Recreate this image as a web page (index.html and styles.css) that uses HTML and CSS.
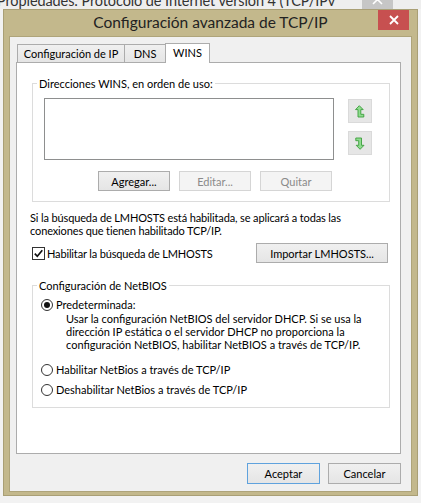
FILE: index.html
```html
<!DOCTYPE html>
<html lang="es">
<head>
<meta charset="utf-8">
<title>Configuración avanzada de TCP/IP</title>
<link rel="stylesheet" href="styles.css">
</head>
<body>
<div class="bg-bar">
  <div class="bg-title">Propiedades: Protocolo de Internet versión 4 (TCP/IPv</div>
  <div class="bg-close">
    <svg width="31" height="9" viewBox="0 0 31 9"><path d="M11 -5 L20 4 M20 -5 L11 4" stroke="#fff" stroke-width="1.6" fill="none"/></svg>
  </div>
</div>
<div class="dialog">
  <div class="titlebar">
    <div class="tb-spacer"></div>
    <div class="title">Configuración avanzada de TCP/IP</div>
    <div class="tb-right">
      <div class="close">
        <svg width="10" height="10" viewBox="0 0 10 10"><path d="M1 1 L9 9 M9 1 L1 9" stroke="#fff" stroke-width="1.8" fill="none"/></svg>
      </div>
    </div>
  </div>
  <div class="client">
    <div class="tabs">
      <div class="tab tab-ip">Configuración de IP</div>
      <div class="tab tab-dns">DNS</div>
      <div class="tab tab-wins active">WINS</div>
    </div>
    <div class="panel">
      <fieldset class="group group-wins">
        <legend>Direcciones WINS, en orden de uso:</legend>
        <div class="group-body wins-body">
          <div class="list-row">
            <div class="listbox"></div>
            <div class="arrows">
              <div class="arrow-btn">
                <svg width="10" height="13" viewBox="0 0 10 13"><path d="M4.3 0.7 L8.2 4.6 L5.8 4.6 L5.8 9.3 L8.8 9.3 L8.8 12 L3 12 L3 4.6 L0.5 4.6 Z" fill="#8fdc8f" stroke="#3c9e3c" stroke-width="0.9" stroke-linejoin="round"/></svg>
              </div>
              <div class="arrow-btn">
                <svg width="10" height="13" viewBox="0 0 10 13"><path d="M0.8 1 L6.5 1 L6.5 8.3 L9 8.3 L5.1 12.3 L1.2 8.3 L3.7 8.3 L3.7 3.7 L0.8 3.7 Z" fill="#8fdc8f" stroke="#3c9e3c" stroke-width="0.9" stroke-linejoin="round"/></svg>
              </div>
            </div>
          </div>
          <div class="btn-row">
            <div class="btn">Agregar...</div>
            <div class="btn disabled">Editar...</div>
            <div class="btn disabled">Quitar</div>
          </div>
        </div>
      </fieldset>
      <p class="note">Si la búsqueda de LMHOSTS está habilitada, se aplicará a todas las<br>conexiones que tienen habilitado TCP/IP.</p>
      <div class="lm-row">
        <div class="check">
          <span class="checkbox">
            <svg width="11" height="11" viewBox="0 0 11 11"><path d="M1.8 5.6 L4.3 8.3 L9.3 2.2" stroke="#111" stroke-width="1.7" fill="none"/></svg>
          </span>
          <span class="check-label">Habilitar la búsqueda de LMHOSTS</span>
        </div>
        <div class="btn btn-import">Importar LMHOSTS...</div>
      </div>
      <fieldset class="group group-netbios">
        <legend>Configuración de NetBIOS</legend>
        <div class="group-body netbios-body">
          <div class="radio-row"><span class="radio checked"></span><span>Predeterminada:</span></div>
          <div class="desc">Usar la configuración NetBIOS del servidor DHCP. Si se usa la<br>dirección IP estática o el servidor DHCP no proporciona la<br>configuración NetBIOS, habilitar NetBIOS a través de TCP/IP.</div>
          <div class="radio-row r2"><span class="radio"></span><span>Habilitar NetBios a través de TCP/IP</span></div>
          <div class="radio-row r3"><span class="radio"></span><span>Deshabilitar NetBios a través de TCP/IP</span></div>
        </div>
      </fieldset>
    </div>
    <div class="footer">
      <div class="btn btn-footer btn-default">Aceptar</div>
      <div class="btn btn-footer">Cancelar</div>
    </div>
  </div>
</div>
</body>
</html>
```

FILE: styles.css
```css
html, body {
  margin: 0;
  padding: 0;
}

body {
  width: 421px;
  height: 503px;
  overflow: hidden;
  background: #f2f2f2;
  font-family: Lato, "Liberation Sans", sans-serif;
  font-size: 11px;
  color: #000;
}

/* Parent window title strip (mostly hidden behind the dialog) */
.bg-bar {
  height: 9px;
  overflow: hidden;
  display: flex;
  background: #eeeeee;
}

.bg-title {
  flex: 1;
  min-width: 0;
  margin-top: -7px;
  margin-left: -3px;
  font-size: 14.5px;
  line-height: 15px;
  letter-spacing: -0.1px;
  white-space: nowrap;
  overflow: hidden;
  color: #333333;
}

.bg-close {
  flex: none;
  width: 31px;
  height: 9px;
  margin-right: 28px;
  background: #c6c6c6;
}

.bg-close svg {
  display: block;
}

/* Dialog window */
.dialog {
  box-sizing: border-box;
  width: 415px;
  height: 487px;
  margin-left: 3px;
  background: #c3b88c;
  border: 1px solid #a99f75;
  padding: 0 5px 3px 5px;
  display: flex;
  flex-direction: column;
}

.titlebar {
  height: 26px;
  display: grid;
  grid-template-columns: 1fr auto 1fr;
  align-items: start;
}

.title {
  font-size: 15.5px;
  line-height: 25px;
  color: #222222;
  white-space: nowrap;
}

.tb-right {
  justify-self: end;
  margin-right: 3px;
}

.close {
  width: 31px;
  height: 20px;
  background: #c75050;
  display: flex;
  align-items: center;
  justify-content: center;
}

.close svg {
  display: block;
}

.client {
  flex: 1;
  background: #f0f0f0;
  border: 1px solid #aea47a;
  padding: 6px 10px 0 6px;
  display: flex;
  flex-direction: column;
}

/* Tabs */
.tabs {
  display: flex;
  align-items: flex-end;
  height: 19px;
  padding-left: 1px;
  position: relative;
  z-index: 1;
}

.tab {
  box-sizing: border-box;
  height: 18px;
  line-height: 17px;
  text-align: center;
  background: linear-gradient(#f0f0f0, #e5e5e5);
  border: 1px solid #acacac;
  border-bottom: none;
  white-space: nowrap;
}

.tab-ip {
  width: 108px;
}

.tab-dns {
  width: 40px;
  border-left: none;
  border-right: none;
}

.tab-wins {
  width: 45px;
}

.tab.active {
  height: 20px;
  line-height: 18px;
  margin-bottom: -1px;
  background: #ffffff;
}

/* Tab page */
.panel {
  box-sizing: border-box;
  height: 392px;
  background: #ffffff;
  border: 1px solid #acacac;
  padding-top: 14px;
}

.group {
  margin: 0 10px 0 15px;
  padding: 0;
  border: 1px solid #dcdcdc;
  min-width: 0;
}

.group legend {
  margin-left: 4px;
  padding: 0 2px;
  line-height: 13px;
}

.wins-body {
  padding: 8px 0 10px 11px;
}

.list-row {
  display: flex;
  align-items: flex-start;
  gap: 14px;
}

.listbox {
  box-sizing: border-box;
  width: 290px;
  height: 62px;
  background: #ffffff;
  border: 1px solid #8e8f8f;
}

.arrows {
  display: flex;
  flex-direction: column;
  gap: 8px;
  padding-top: 1px;
}

.arrow-btn {
  box-sizing: border-box;
  width: 24px;
  height: 24px;
  background: #e6e6e6;
  border: 1px solid #dadada;
  display: flex;
  align-items: center;
  justify-content: center;
}

.arrow-btn svg {
  display: block;
}

.btn-row {
  display: flex;
  gap: 9px;
  margin-top: 11px;
  margin-left: 54px;
}

.btn {
  box-sizing: border-box;
  width: 72px;
  height: 20px;
  background: linear-gradient(#f0f0f0, #e5e5e5);
  border: 1px solid #acacac;
  display: flex;
  align-items: center;
  justify-content: center;
  white-space: nowrap;
}

.btn.disabled {
  background: #f4f4f4;
  border-color: #d5d5d5;
  color: #8a8a8a;
}

.note {
  margin: 9px 0 0 13px;
  line-height: 13px;
  letter-spacing: -0.13px;
  white-space: nowrap;
}

.lm-row {
  display: flex;
  align-items: center;
  justify-content: space-between;
  margin: 6px 12px 0 15px;
}

.check {
  display: flex;
  align-items: center;
  gap: 2px;
}

.check-label {
  letter-spacing: -0.15px;
}

.checkbox {
  box-sizing: border-box;
  width: 13px;
  height: 13px;
  background: #ffffff;
  border: 1px solid #333333;
  display: flex;
  align-items: center;
  justify-content: center;
}

.checkbox svg {
  display: block;
}

.btn-import {
  width: 132px;
}

.group-netbios {
  margin-top: 16px;
}

.netbios-body {
  padding: 6px 0 11px 8px;
}

.radio-row {
  display: flex;
  align-items: center;
  gap: 3px;
  line-height: 13px;
  white-space: nowrap;
}

.radio {
  box-sizing: border-box;
  width: 12px;
  height: 12px;
  border: 1px solid #333333;
  border-radius: 50%;
  background: #ffffff;
  display: flex;
  align-items: center;
  justify-content: center;
}

.radio.checked::after {
  content: "";
  width: 6px;
  height: 6px;
  border-radius: 50%;
  background: #111111;
}

.desc {
  margin: 1px 0 0 25px;
  line-height: 13px;
  white-space: nowrap;
}

.r2 {
  margin-top: 12px;
}

.r3 {
  margin-top: 7px;
}

/* Dialog buttons */
.footer {
  display: flex;
  justify-content: flex-end;
  gap: 8px;
  margin-top: 9px;
}

.btn-footer {
  width: 73px;
  height: 21px;
}

.btn-default {
  border-color: #5fa2dd;
}
```
